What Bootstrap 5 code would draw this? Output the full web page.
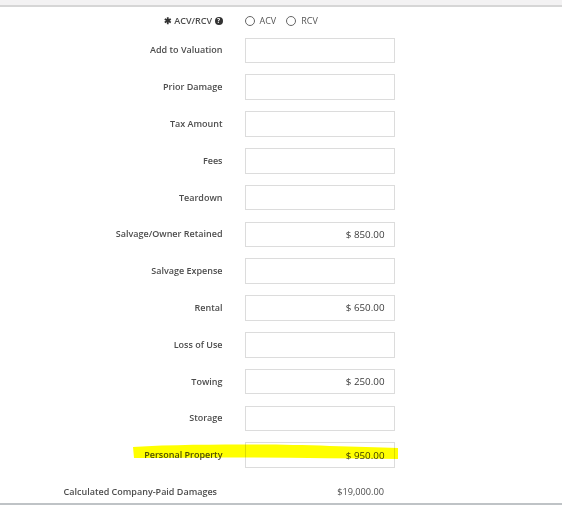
<!doctype html>
<html lang="en">
<head>
<meta charset="utf-8">
<title>Damages form</title>
<link href="https://cdn.jsdelivr.net/npm/bootstrap@5.3.0/dist/css/bootstrap.min.css" rel="stylesheet">
<style>
html,body{height:505px;overflow:hidden;background:#fff}
body{font-family:"Open Sans","Liberation Sans",sans-serif;font-size:9px;color:#555;position:relative}
.topband{height:7px;background:#f3f2f3;border-bottom:2px solid #d6d6d6}
.botband{position:absolute;left:0;right:0;bottom:0;height:2px;background:#bfc3c6}
.formwrap{padding-top:5px}
.frow{display:flex;align-items:center;height:36.8px;margin:0}
.flabel{width:222.5px;text-align:right;font-weight:600;font-size:9px;color:#4d4d4d;margin:0 0 .5px;flex:none;white-space:nowrap}
.fbox{width:150px;height:25.5px;margin-left:22px;flex:none;border:1px solid #dcdcdc;border-radius:0;box-shadow:none;padding:0 9px 0;text-align:right;font-size:9.8px;color:#3d3d3d;background:#fff;font-family:inherit}
.radiorow{height:17px;margin-top:0;margin-bottom:3px}
.radiorow .flabel{margin-bottom:0}
.radios{margin-left:22px;display:flex;align-items:center;gap:5px;font-size:9px;color:#555}
.rdot{width:10px;height:10px;border:1px solid #666;border-radius:50%;display:inline-block}
.rsep{margin-left:5px}
.qicon{display:inline-block;width:8px;height:8px;border-radius:50%;background:#333;color:#fff;font-size:6.5px;line-height:8px;text-align:center;font-weight:700;vertical-align:1px}
.star{color:#333;font-size:9px;font-weight:700}
.calcrow{display:flex;align-items:center;height:18px;margin-top:9px}
.calclabel{width:217px;text-align:right;font-weight:600;font-size:9px;color:#4d4d4d;flex:none}
.calcval{width:167px;text-align:right;font-size:9.2px;color:#4d4d4d;flex:none}
.hilite{position:absolute;left:130px;top:442px;width:272px;height:22px;mix-blend-mode:multiply;pointer-events:none}
</style>
</head>
<body>
<div class="topband"></div>
<form class="formwrap">
  <div class="frow radiorow">
    <div class="flabel"><span class="star">✱</span> ACV/RCV <span class="qicon">?</span></div>
    <div class="radios"><span class="rdot"></span><span>ACV</span><span class="rdot rsep"></span><span>RCV</span></div>
  </div>
  <div class="frow"><label class="flabel">Add to Valuation</label><input class="fbox" type="text"></div>
  <div class="frow"><label class="flabel">Prior Damage</label><input class="fbox" type="text"></div>
  <div class="frow"><label class="flabel">Tax Amount</label><input class="fbox" type="text"></div>
  <div class="frow"><label class="flabel">Fees</label><input class="fbox" type="text"></div>
  <div class="frow"><label class="flabel">Teardown</label><input class="fbox" type="text"></div>
  <div class="frow"><label class="flabel">Salvage/Owner Retained</label><input class="fbox" type="text" value="$ 850.00"></div>
  <div class="frow"><label class="flabel">Salvage Expense</label><input class="fbox" type="text"></div>
  <div class="frow"><label class="flabel">Rental</label><input class="fbox" type="text" value="$ 650.00"></div>
  <div class="frow"><label class="flabel">Loss of Use</label><input class="fbox" type="text"></div>
  <div class="frow"><label class="flabel">Towing</label><input class="fbox" type="text" value="$ 250.00"></div>
  <div class="frow"><label class="flabel">Storage</label><input class="fbox" type="text"></div>
  <div class="frow"><label class="flabel">Personal Property</label><input class="fbox" type="text" value="$ 950.00"></div>
  <div class="calcrow"><div class="calclabel">Calculated Company-Paid Damages</div><div class="calcval">$19,000.00</div></div>
</form>
<svg class="hilite" viewBox="0 0 272 22" aria-hidden="true"><path d="M3 5 C40 2.5 90 2.5 130 2.5 C170 2.5 230 5 268 6 L268 17 C220 16.5 170 16 120 15.5 C80 15.5 40 16 4 16 Z" fill="#ffff00"/></svg>
<div class="botband"></div>
<script src="https://cdn.jsdelivr.net/npm/bootstrap@5.3.0/dist/js/bootstrap.bundle.min.js"></script>
</body>
</html>
